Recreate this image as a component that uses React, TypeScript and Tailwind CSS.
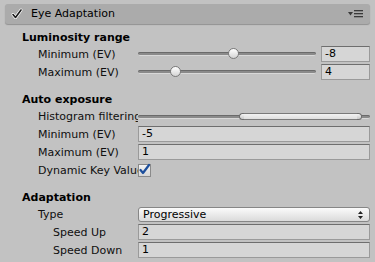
import React from 'react';

const font = { fontFamily: '"DejaVu Sans", Verdana, sans-serif' };

function Label({ children, indent = 38 }: { children: React.ReactNode; indent?: number }) {
  return (
    <div
      className="w-[138px] shrink-0 overflow-hidden whitespace-nowrap text-[11px] leading-[18px] text-[#0f0f0f]"
      style={{ paddingLeft: indent }}
    >
      {children}
    </div>
  );
}

function Field({ value, className = '' }: { value: string; className?: string }) {
  return (
    <div
      className={`h-[16px] bg-[#d6d6d6] border border-[#9a9a9a] border-t-[#6e6e6e] pl-[3px] text-[11px] leading-[14px] text-black ${className}`}
    >
      {value}
    </div>
  );
}

function Slider({ thumb, value }: { thumb: number; value: string }) {
  return (
    <div className="flex flex-1 items-center gap-[5px]">
      <div className="relative flex-1 h-[16px] flex items-center">
        <div className="w-full h-[4px] rounded-full bg-[#8a8a8a] border-b border-[#d8d8d8] shadow-[inset_0_1px_0_#6a6a6a]" />
        <div
          className="absolute top-[2px] w-[11px] h-[11px] rounded-full border border-[#7a7a7a] bg-gradient-to-b from-[#ffffff] to-[#d4d4d4]"
          style={{ left: thumb }}
        />
      </div>
      <Field value={value} className="w-[49px]" />
    </div>
  );
}

function Row({ children }: { children: React.ReactNode }) {
  return <div className="flex h-[18px] items-start pr-[5px]">{children}</div>;
}

function Title({ children }: { children: React.ReactNode }) {
  return (
    <div className="h-[18px] pl-[22px] pt-[1px] text-[11px] leading-[18px] font-bold text-black">{children}</div>
  );
}

export default function App() {
  return (
    <div className="w-[375px] h-[262px] overflow-hidden bg-[#c2c2c2]" style={font}>
      {/* Header */}
      <div className="mx-[5px] mt-[4px] h-[20px] rounded-[3px] bg-[#ababab] shadow-[0_1px_1px_rgba(0,0,0,0.25)] flex items-center pl-[5px] pr-[5px]">
        <svg width="14" height="14" viewBox="0 0 14 14" className="shrink-0">
          <path d="M3 7.5 L5.5 10.5 L11 3" fill="none" stroke="#ffffff" strokeWidth="3" strokeLinecap="round" strokeLinejoin="round" />
          <path d="M3 7.5 L5.5 10.5 L11 3" fill="none" stroke="#1a1a1a" strokeWidth="1.6" strokeLinecap="round" strokeLinejoin="round" />
        </svg>
        <span className="ml-[7px] text-[11px] leading-[20px] text-black">Eye Adaptation</span>
        <div className="ml-auto flex items-center gap-[1px] mr-[2px]">
          <svg width="5" height="4" viewBox="0 0 5 4">
            <path d="M0 0 H5 L2.5 3.5 Z" fill="#3a3a3a" />
          </svg>
          <svg width="9" height="8" viewBox="0 0 9 8">
            <rect x="0" y="0" width="9" height="1.3" fill="#3a3a3a" />
            <rect x="0" y="3" width="9" height="1.3" fill="#3a3a3a" />
            <rect x="0" y="6" width="9" height="1.3" fill="#3a3a3a" />
          </svg>
        </div>
      </div>

      <div className="mt-[4px]">
        <Title>Luminosity range</Title>
        <Row>
          <Label>Minimum (EV)</Label>
          <Slider thumb={90} value="-8" />
        </Row>
        <Row>
          <Label>Maximum (EV)</Label>
          <Slider thumb={32} value="4" />
        </Row>

        <div className="h-[8px]" />
        <Title>Auto exposure</Title>
        <Row>
          <Label>Histogram filtering</Label>
          <div className="relative flex-1 h-[18px] flex items-center">
            <div className="w-full h-[4px] rounded-full bg-[#8a8a8a] border-b border-[#d8d8d8] shadow-[inset_0_1px_0_#6a6a6a]" />
            <div className="absolute left-[101px] right-[8px] top-[5px] h-[7px] flex">
              <div className="w-[5px] h-full rounded-l-[4px] border border-r-0 border-[#6e6e6e] bg-gradient-to-b from-[#f4f4f4] to-[#c8c8c8]" />
              <div className="flex-1 h-full border-y border-[#7a7a7a] bg-gradient-to-b from-[#f2f2f2] to-[#dedede]" />
              <div className="w-[5px] h-full rounded-r-[4px] border border-l-0 border-[#6e6e6e] bg-gradient-to-b from-[#f4f4f4] to-[#c8c8c8]" />
            </div>
          </div>
        </Row>
        <Row>
          <Label>Minimum (EV)</Label>
          <Field value="-5" className="flex-1" />
        </Row>
        <Row>
          <Label>Maximum (EV)</Label>
          <Field value="1" className="flex-1" />
        </Row>
        <Row>
          <Label>Dynamic Key Value</Label>
          <div className="relative mt-[2px] w-[13px] h-[13px] border border-[#8a8a8a] bg-gradient-to-b from-[#f4f4f4] to-[#d6d6d6]">
            <svg width="13" height="13" viewBox="0 0 13 13" className="absolute -left-[1px] -top-[2px]">
              <path d="M2.5 7 L5 10 L11 2" fill="none" stroke="#1d4f9c" strokeWidth="2.2" strokeLinecap="round" strokeLinejoin="round" />
            </svg>
          </div>
        </Row>

        <div className="h-[8px]" />
        <Title>Adaptation</Title>
        <Row>
          <Label>Type</Label>
          <div className="flex-1 mt-[1px] h-[15px] rounded-[3px] border border-[#868686] bg-gradient-to-b from-[#fbfbfb] to-[#dadada] flex items-center pl-[4px] pr-[6px] text-[11px] text-black">
            <span className="leading-[13px]">Progressive</span>
            <svg width="5" height="8" viewBox="0 0 5 8" className="ml-auto">
              <path d="M0 3 L2.5 0 L5 3 Z M0 5 L2.5 8 L5 5 Z" fill="#222" />
            </svg>
          </div>
        </Row>
        <Row>
          <Label indent={53}>Speed Up</Label>
          <Field value="2" className="flex-1" />
        </Row>
        <Row>
          <Label indent={53}>Speed Down</Label>
          <Field value="1" className="flex-1" />
        </Row>
      </div>
    </div>
  );
}
